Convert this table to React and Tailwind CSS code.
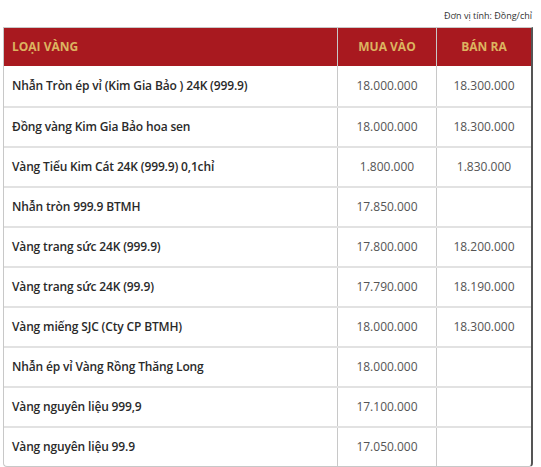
const rows = [
    ['Nhẫn Tròn ép vỉ (Kim Gia Bảo ) 24K (999.9)', '18.000.000', '18.300.000'],
    ['Đồng vàng Kim Gia Bảo hoa sen', '18.000.000', '18.300.000'],
    ['Vàng Tiểu Kim Cát 24K (999.9) 0,1chỉ', '1.800.000', '1.830.000'],
    ['Nhẫn tròn 999.9 BTMH', '17.850.000', ''],
    ['Vàng trang sức 24K (999.9)', '17.800.000', '18.200.000'],
    ['Vàng trang sức 24K (99.9)', '17.790.000', '18.190.000'],
    ['Vàng miếng SJC (Cty CP BTMH)', '18.000.000', '18.300.000'],
    ['Nhẫn ép vỉ Vàng Rồng Thăng Long', '18.000.000', ''],
    ['Vàng nguyên liệu 999,9', '17.100.000', ''],
    ['Vàng nguyên liệu 99.9', '17.050.000', ''],
];

const App = () => {
    return (
        <div className="w-[541px] h-[467px] bg-white font-['Open_Sans',sans-serif] text-[#222]">
            <div className="h-[27px] flex items-center justify-end pr-[9px] pt-[4px] text-[9px] text-[#333]">
                Đơn vị tính: Đồng/chỉ
            </div>
            <div className="ml-[3px] w-[530px] border-l border-t border-[#c8c8c8] border-r-2 border-r-[#555] border-b border-b-[#c8c8c8] rounded-b-[4px] overflow-hidden">
                <div className="grid grid-cols-[333px_99px_1fr] h-[38px] bg-[#a8191f] text-[#dcb460] text-[12px] font-bold">
                    <div className="flex items-center pl-[8px]">LOẠI VÀNG</div>
                    <div className="flex items-center justify-center border-l border-[#c8c8c8]">MUA VÀO</div>
                    <div className="flex items-center justify-center border-l border-[#c8c8c8]">BÁN RA</div>
                </div>
                {rows.map((r, i) => (
                    <div
                        key={i}
                        className={`grid grid-cols-[333px_99px_1fr] h-[40px] text-[12px] ${i > 0 ? 'border-t-2 border-[#e2e2e2]' : ''}`}
                    >
                        <div className="flex items-center pl-[8px] font-semibold tracking-[-0.15px] text-[#2a2a2a]">{r[0]}</div>
                        <div className="flex items-center justify-center border-l border-[#c8c8c8] text-[#555]">{r[1]}</div>
                        <div className="flex items-center justify-center border-l border-[#c8c8c8] text-[#555]">{r[2]}</div>
                    </div>
                ))}
            </div>
        </div>
    );
};

export default App;
